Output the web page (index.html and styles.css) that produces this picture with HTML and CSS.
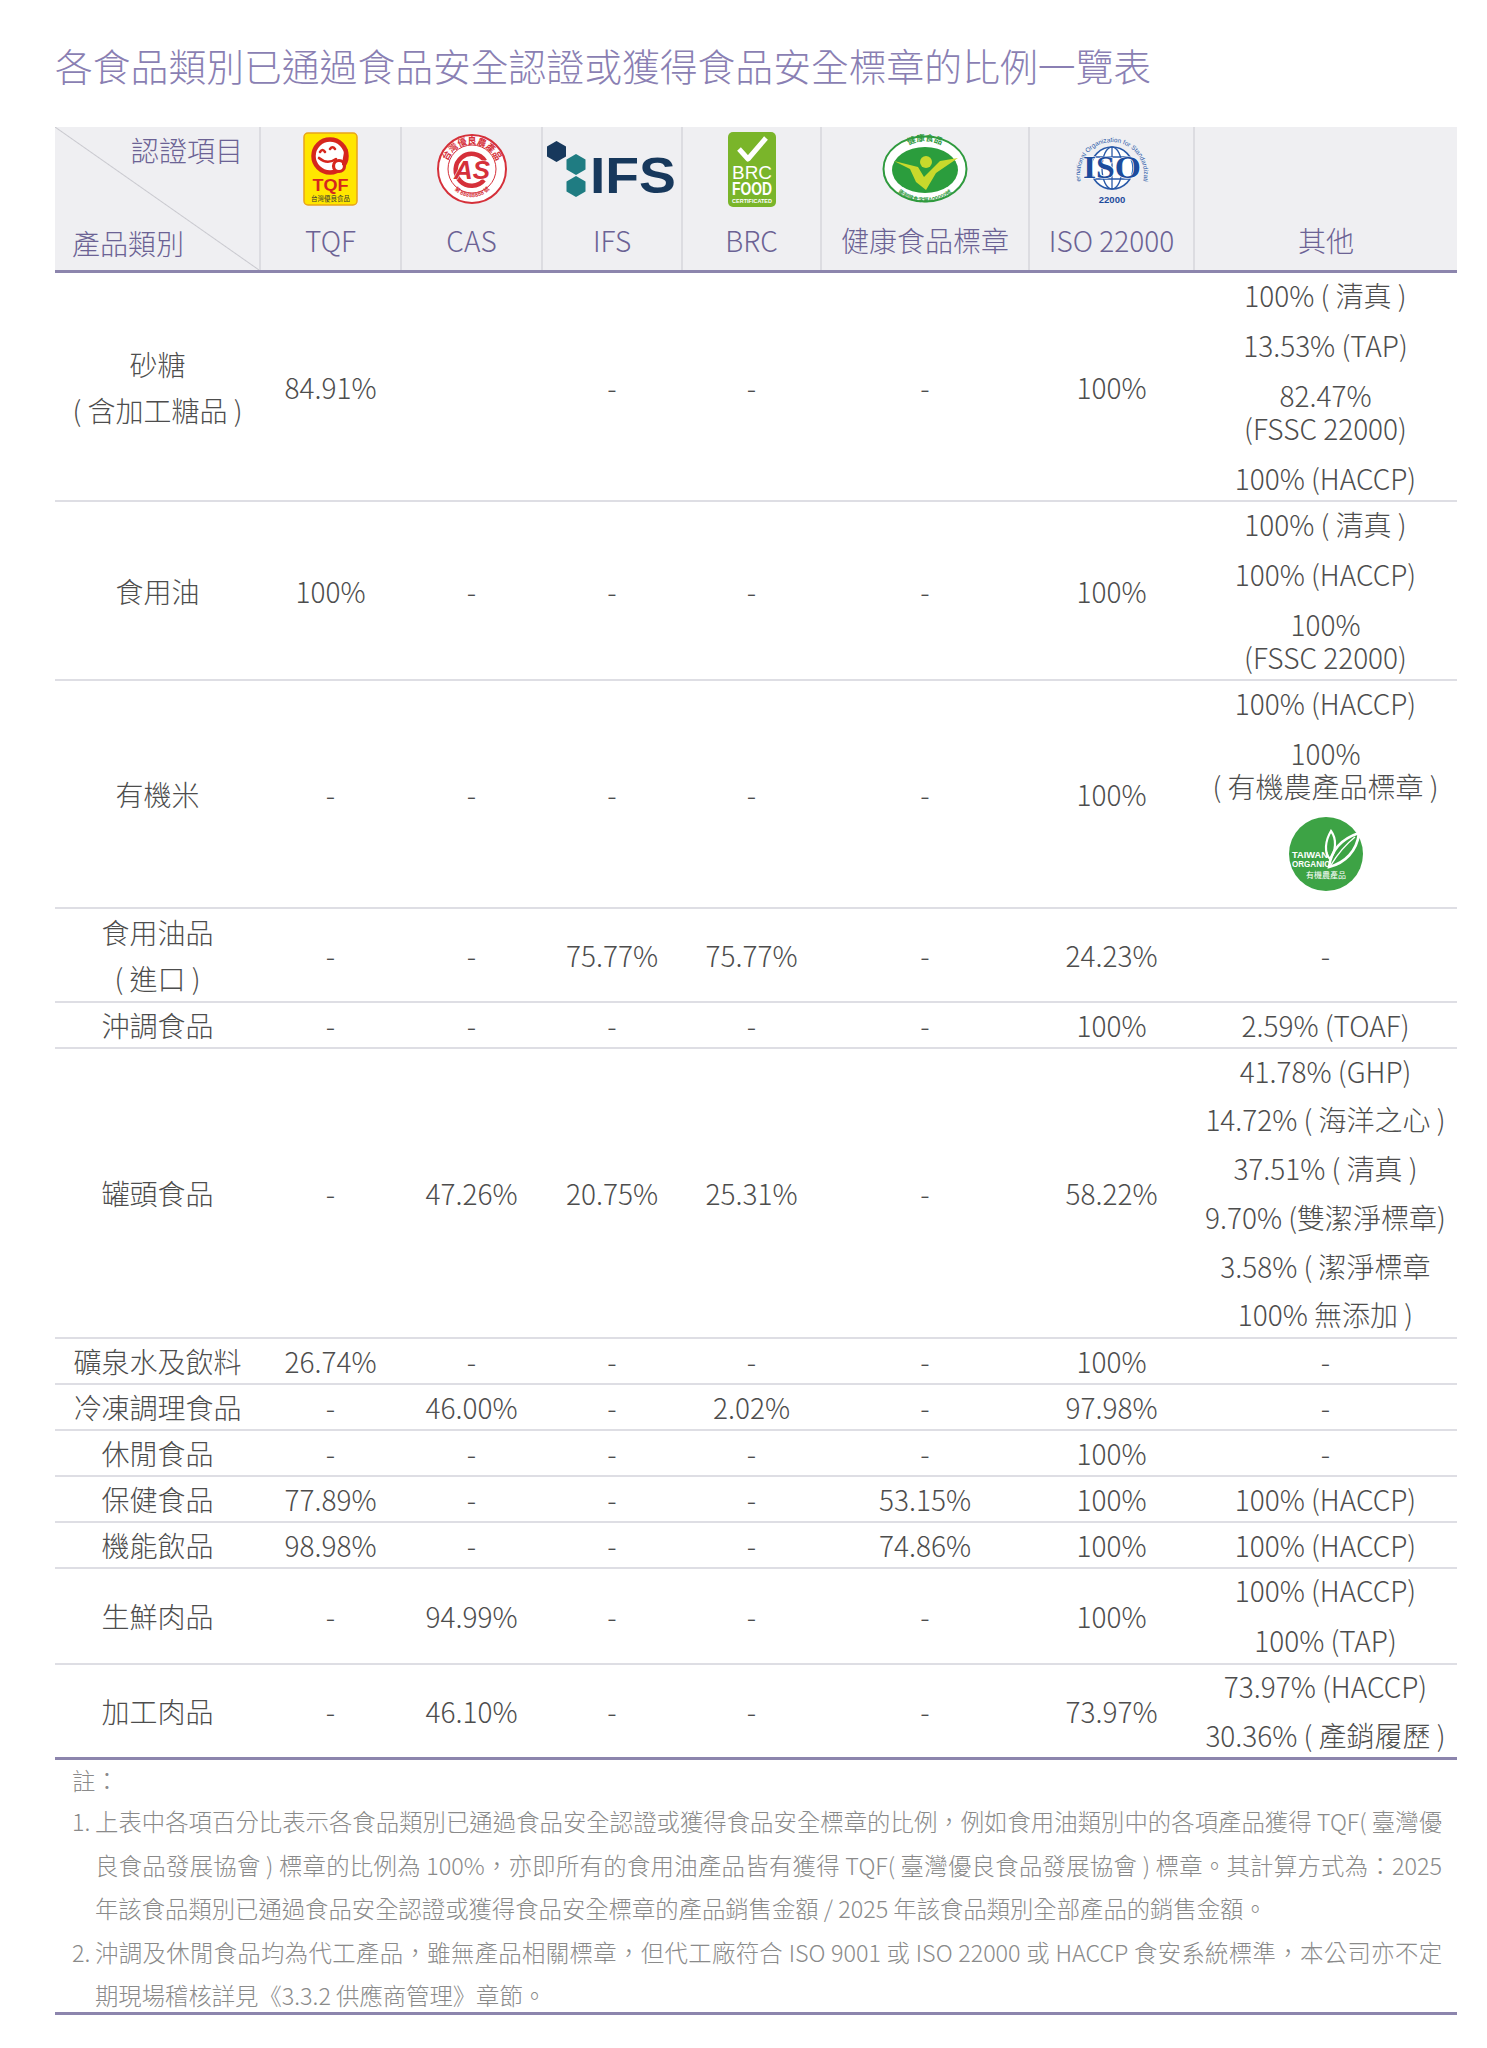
FILE: index.html
```html
<!DOCTYPE html>
<html lang="zh-Hant">
<head>
<meta charset="utf-8">
<title>各食品類別已通過食品安全認證或獲得食品安全標章的比例一覽表</title>
<link rel="stylesheet" href="styles.css">
</head>
<body>
<div class="page">
  <h1 class="title">各食品類別已通過食品安全認證或獲得食品安全標章的比例一覽表</h1>
  <table class="cert">
    <colgroup>
      <col class="c-name"><col class="c-tqf"><col class="c-cas"><col class="c-ifs"><col class="c-brc"><col class="c-hf"><col class="c-iso"><col class="c-oth">
    </colgroup>
    <thead>
      <tr>
        <th class="corner">
          <div class="corner-in">
            <span class="c-top">認證項目</span>
            <span class="c-bot">產品類別</span>
          </div>
        </th>
        <th>
          <div class="lg">
            <svg width="55" height="74" viewBox="0 0 55 74">
              <rect x="1" y="1" width="53" height="72" rx="4" fill="#ffe600" stroke="#e9a41a" stroke-width="1.5"/>
              <circle cx="27" cy="24" r="16.5" fill="#fff" stroke="#d6261d" stroke-width="4.5"/>
              <path d="M17 20 q2.5 -4 5 0" fill="none" stroke="#d6261d" stroke-width="2.6" stroke-linecap="round"/>
              <path d="M27 17 q2.5 -3.5 5 0" fill="none" stroke="#d6261d" stroke-width="2.6" stroke-linecap="round"/>
              <path d="M16 26 q8 7 17 1" fill="none" stroke="#d6261d" stroke-width="2.6" stroke-linecap="round"/>
              <circle cx="36" cy="34" r="5.5" fill="#fff" stroke="#d6261d" stroke-width="3.2"/>
              <path d="M40.5 32 L43 18" stroke="#d6261d" stroke-width="3.2" stroke-linecap="round"/>
              <text x="27.5" y="59" text-anchor="middle" class="svg-tqf" textLength="36" lengthAdjust="spacingAndGlyphs">TQF</text>
              <text x="27.5" y="69" text-anchor="middle" class="svg-tiny">台灣優良食品</text>
            </svg>
          </div>
          <div class="lbl">TQF</div>
        </th>
        <th>
          <div class="lg">
            <svg width="72" height="72" viewBox="0 0 72 72">
              <defs>
                <path id="casTop" d="M10 37 A26 26 0 0 1 62 37"/>
                <path id="casBot" d="M13 47 A24 24 0 0 0 59 47"/>
              </defs>
              <circle cx="36" cy="36" r="34" fill="#fff" stroke="#d5303a" stroke-width="2"/>
              <circle cx="36" cy="36" r="24" fill="#fff" stroke="#d5303a" stroke-width="1"/>
              <text class="svg-cas-arc"><textPath href="#casTop" startOffset="50%" text-anchor="middle">台灣優良農產品</textPath></text>
              <text class="svg-cas-bot"><textPath href="#casBot" startOffset="50%" text-anchor="middle">第 88888888 號</textPath></text>
              <path d="M49 28 A16 16 0 1 0 48 47" fill="none" stroke="#d5303a" stroke-width="4.5"/>
              <text x="36" y="46" text-anchor="middle" class="svg-as" textLength="36" lengthAdjust="spacingAndGlyphs">AS</text>
            </svg>
          </div>
          <div class="lbl">CAS</div>
        </th>
        <th>
          <div class="lg">
            <svg width="132" height="56" viewBox="0 0 132 56">
              <polygon points="10.5,0 20,5.5 20,15.5 10.5,21 1,15.5 1,5.5" fill="#17385c"/>
              <polygon points="30,13 39.5,18.5 39.5,28.5 30,34 20.5,28.5 20.5,18.5" fill="#1f7c82"/>
              <polygon points="30,35 39.5,40.5 39.5,50.5 30,56 20.5,50.5 20.5,40.5" fill="#1f7c82"/>
              <text x="44" y="52" class="svg-ifs" textLength="86" lengthAdjust="spacingAndGlyphs">IFS</text>
            </svg>
          </div>
          <div class="lbl">IFS</div>
        </th>
        <th>
          <div class="lg">
            <svg width="48" height="75" viewBox="0 0 48 75">
              <rect x="0" y="0" width="48" height="75" rx="5" fill="#7ab52a"/>
              <path d="M11 17 L20 27 L38 6" fill="none" stroke="#fff" stroke-width="5" stroke-linejoin="round"/>
              <text x="24" y="47" text-anchor="middle" class="svg-brc" textLength="40" lengthAdjust="spacingAndGlyphs">BRC</text>
              <text x="24" y="63" text-anchor="middle" class="svg-food" textLength="40" lengthAdjust="spacingAndGlyphs">FOOD</text>
              <text x="24" y="71" text-anchor="middle" class="svg-cert" textLength="40" lengthAdjust="spacingAndGlyphs">CERTIFICATED</text>
            </svg>
          </div>
          <div class="lbl">BRC</div>
        </th>
        <th>
          <div class="lg">
            <svg width="86" height="68" viewBox="0 0 86 68">
              <defs>
                <path id="hfTop" d="M14 30 A29 24 0 0 1 72 30"/>
                <path id="hfBot" d="M7 38 A36 29 0 0 0 79 38"/>
              </defs>
              <ellipse cx="43" cy="34" rx="41.5" ry="32.5" fill="#fff" stroke="#2f9a3e" stroke-width="2"/>
              <ellipse cx="43" cy="35" rx="33" ry="23" fill="#2b9d3d"/>
              <text class="svg-hf"><textPath href="#hfTop" startOffset="50%" text-anchor="middle">健康食品</textPath></text>
              <text class="svg-hf-bot"><textPath href="#hfBot" startOffset="50%" text-anchor="middle">衛部健食字第A00000號</textPath></text>
              <path d="M12 26 L36 32 L42 42 L58 26 L76 23 L54 38 L44 55 L34 47 L28 34 Z" fill="#c9d92c"/>
              <circle cx="44" cy="27" r="6" fill="#c9d92c"/>
            </svg>
          </div>
          <div class="lbl">健康食品標章</div>
        </th>
        <th>
          <div class="lg">
            <svg width="78" height="74" viewBox="0 0 78 74">
              <defs>
                <path id="isoArc" d="M8 50 A32 32 0 1 1 70 50"/>
              </defs>
              <text class="svg-iso-arc"><textPath href="#isoArc" startOffset="50%" text-anchor="middle">International Organization for Standardization</textPath></text>
              <circle cx="39" cy="36" r="21" fill="#fff" stroke="#2a5aa8" stroke-width="1.6"/>
              <ellipse cx="39" cy="36" rx="10" ry="21" fill="none" stroke="#2a5aa8" stroke-width="1.3"/>
              <line x1="39" y1="15" x2="39" y2="57" stroke="#2a5aa8" stroke-width="1.3"/>
              <line x1="21" y1="25" x2="57" y2="25" stroke="#2a5aa8" stroke-width="1.3"/>
              <line x1="21" y1="47" x2="57" y2="47" stroke="#2a5aa8" stroke-width="1.3"/>
              <text x="39" y="46" text-anchor="middle" class="svg-iso" textLength="58" lengthAdjust="spacingAndGlyphs">ISO</text>
              <text x="39" y="71" text-anchor="middle" class="svg-iso-n">22000</text>
            </svg>
          </div>
          <div class="lbl">ISO 22000</div>
        </th>
        <th>
          <div class="lg"></div>
          <div class="lbl">其他</div>
        </th>
      </tr>
    </thead>
    <tbody>
      <tr>
        <td class="name multi">砂糖<br>( 含加工糖品 )</td>
        <td>84.91%</td><td></td><td>-</td><td>-</td><td>-</td><td>100%</td>
        <td class="oth">
          <div class="e">100% ( 清真 )</div>
          <div class="e">13.53% (TAP)</div>
          <div class="e">82.47%<br>(FSSC 22000)</div>
          <div class="e">100% (HACCP)</div>
        </td>
      </tr>
      <tr>
        <td class="name">食用油</td>
        <td>100%</td><td>-</td><td>-</td><td>-</td><td>-</td><td>100%</td>
        <td class="oth">
          <div class="e">100% ( 清真 )</div>
          <div class="e">100% (HACCP)</div>
          <div class="e">100%<br>(FSSC 22000)</div>
        </td>
      </tr>
      <tr>
        <td class="name">有機米</td>
        <td>-</td><td>-</td><td>-</td><td>-</td><td>-</td><td>100%</td>
        <td class="oth">
          <div class="e">100% (HACCP)</div>
          <div class="e">100%<br>( 有機農產品標章 )</div>
          <div class="organic">
            <svg width="74" height="74" viewBox="0 0 74 74">
              <circle cx="37" cy="37" r="37" fill="#3da345"/>
              <path d="M40 50 C42 34 52 22 70 16 C68 34 56 46 40 50 Z" fill="none" stroke="#fff" stroke-width="2.6"/>
              <path d="M42 48 C48 38 56 28 66 20" fill="none" stroke="#fff" stroke-width="1.4"/>
              <path d="M41 42 C35 36 36 24 42 14 C48 22 47 34 41 42 Z" fill="none" stroke="#fff" stroke-width="2.2"/>
              <text x="3" y="41" class="svg-org" textLength="36" lengthAdjust="spacingAndGlyphs">TAIWAN</text>
              <text x="3" y="50" class="svg-org" textLength="38" lengthAdjust="spacingAndGlyphs">ORGANIC</text>
              <text x="37" y="61" text-anchor="middle" class="svg-org-zh">有機農產品</text>
            </svg>
          </div>
        </td>
      </tr>
      <tr>
        <td class="name multi">食用油品<br>( 進口 )</td>
        <td>-</td><td>-</td><td>75.77%</td><td>75.77%</td><td>-</td><td>24.23%</td>
        <td>-</td>
      </tr>
      <tr>
        <td class="name">沖調食品</td>
        <td>-</td><td>-</td><td>-</td><td>-</td><td>-</td><td>100%</td>
        <td class="oth"><div class="e">2.59% (TOAF)</div></td>
      </tr>
      <tr>
        <td class="name">罐頭食品</td>
        <td>-</td><td>47.26%</td><td>20.75%</td><td>25.31%</td><td>-</td><td>58.22%</td>
        <td class="oth tight">
          <div class="e">41.78% (GHP)</div>
          <div class="e">14.72% ( 海洋之心 )</div>
          <div class="e">37.51% ( 清真 )</div>
          <div class="e">9.70% (雙潔淨標章)</div>
          <div class="e">3.58% ( 潔淨標章</div>
          <div class="e">100% 無添加 )</div>
        </td>
      </tr>
      <tr>
        <td class="name">礦泉水及飲料</td>
        <td>26.74%</td><td>-</td><td>-</td><td>-</td><td>-</td><td>100%</td><td>-</td>
      </tr>
      <tr>
        <td class="name">冷凍調理食品</td>
        <td>-</td><td>46.00%</td><td>-</td><td>2.02%</td><td>-</td><td>97.98%</td><td>-</td>
      </tr>
      <tr>
        <td class="name">休閒食品</td>
        <td>-</td><td>-</td><td>-</td><td>-</td><td>-</td><td>100%</td><td>-</td>
      </tr>
      <tr>
        <td class="name">保健食品</td>
        <td>77.89%</td><td>-</td><td>-</td><td>-</td><td>53.15%</td><td>100%</td><td>100% (HACCP)</td>
      </tr>
      <tr>
        <td class="name">機能飲品</td>
        <td>98.98%</td><td>-</td><td>-</td><td>-</td><td>74.86%</td><td>100%</td><td>100% (HACCP)</td>
      </tr>
      <tr>
        <td class="name">生鮮肉品</td>
        <td>-</td><td>94.99%</td><td>-</td><td>-</td><td>-</td><td>100%</td>
        <td class="oth">
          <div class="e">100% (HACCP)</div>
          <div class="e">100% (TAP)</div>
        </td>
      </tr>
      <tr>
        <td class="name">加工肉品</td>
        <td>-</td><td>46.10%</td><td>-</td><td>-</td><td>-</td><td>73.97%</td>
        <td class="oth">
          <div class="e">73.97% (HACCP)</div>
          <div class="e">30.36% ( 產銷履歷 )</div>
        </td>
      </tr>
    </tbody>
  </table>
  <div class="notes">
    <div class="note-h">註：</div>
    <div class="note"><span class="num">1.</span><p>上表中各項百分比表示各食品類別已通過食品安全認證或獲得食品安全標章的比例，例如食用油類別中的各項產品獲得 TQF( 臺灣優良食品發展協會 ) 標章的比例為 100%，亦即所有的食用油產品皆有獲得 TQF( 臺灣優良食品發展協會 ) 標章。其計算方式為：2025 年該食品類別已通過食品安全認證或獲得食品安全標章的產品銷售金額 / 2025 年該食品類別全部產品的銷售金額。</p></div>
    <div class="note"><span class="num">2.</span><p>沖調及休閒食品均為代工產品，雖無產品相關標章，但代工廠符合 ISO 9001 或 ISO 22000 或 HACCP 食安系統標準，本公司亦不定期現場稽核詳見《3.3.2 供應商管理》章節。</p></div>
  </div>
</div>
</body>
</html>
```

FILE: styles.css
```css
* { box-sizing: border-box; }
html, body { margin: 0; padding: 0; background: #fff; }
body {
  font-family: "Noto Sans CJK TC", "Noto Sans", sans-serif;
  font-weight: 300;
  color: #4d4d4d;
}
.page {
  width: 1487px;
  padding: 40px 30px 0 55px;
}
.title {
  margin: 0 0 38px;
  font-size: 37.8px;
  line-height: 49px;
  font-weight: 300;
  color: #8a7fb3;
  letter-spacing: 0;
}
.cert {
  width: 1402px;
  table-layout: fixed;
  border-collapse: collapse;
}
.c-name { width: 205px; }
.c-tqf { width: 141px; }
.c-cas { width: 141px; }
.c-ifs { width: 140px; }
.c-brc { width: 139px; }
.c-hf { width: 208px; }
.c-iso { width: 165px; }
.c-oth { width: 263px; }

.cert th {
  background: #efeff2;
  padding: 2px 0 8px;
  height: 143px;
  border-left: 2px solid #dcdce1;
  border-bottom: 3px solid #8c85ad;
  vertical-align: top;
  font-weight: 300;
}
.cert th:first-child { border-left: none; }
.lg {
  height: 80px;
  display: flex;
  align-items: center;
  justify-content: center;
}
.lg svg { display: block; overflow: visible; }
.lbl {
  margin-top: 9px;
  font-size: 28px;
  line-height: 44px;
  color: #6b6294;
  white-space: nowrap;
}
.cert th.corner {
  padding: 0;
  background-color: #efeff2;
  background-image: linear-gradient(to top right, rgba(0,0,0,0) calc(50% - 1px), #c9c9cf 50%, rgba(0,0,0,0) calc(50% + 1px));
}
.corner-in {
  height: 141px;
  display: flex;
  flex-direction: column;
  justify-content: space-between;
  padding: 3px 16px 5px 17px;
  font-size: 28px;
  line-height: 40px;
  color: #6b6294;
}
.c-top { align-self: flex-end; }
.c-bot { align-self: flex-start; }

.cert td {
  font-size: 28px;
  line-height: 44px;
  text-align: center;
  vertical-align: middle;
  padding: 0 2px;
  border-bottom: 2px solid #dedee4;
  color: #4d4d4d;
  white-space: nowrap;
}
.cert tbody tr:last-child td { border-bottom: 3px solid #8c85ad; line-height: 43px; }
.cert td.multi { line-height: 46px; }
.oth .e {
  line-height: 33px;
  padding: 5.5px 0;
}
.oth .e + .e { margin-top: 6px; }
.oth.tight .e + .e { margin-top: 4.8px; }
.cert tbody tr:last-child .oth .e + .e { margin-top: 4.5px; }
.organic {
  display: flex;
  justify-content: center;
  padding: 9px 0 16px;
}
.organic svg { display: block; }

.notes {
  padding: 0 15px 0 17px;
  border-bottom: 3px solid #8c85ad;
  font-size: 23.35px;
  line-height: 43.5px;
  color: #8a8a8a;
}
.note-h { line-height: 40px; }
.note { display: flex; }
.note:last-child { margin-bottom: -6px; }
.num { flex: 0 0 23px; }
.note p {
  margin: 0;
  flex: 1;
  text-align: justify;
}

/* svg text */
.svg-tqf { font-family: "Liberation Sans", sans-serif; font-weight: 700; font-size: 16px; fill: #d6261d; }
.svg-tiny { font-family: "Noto Sans CJK TC", sans-serif; font-weight: 400; font-size: 6.5px; fill: #333; }
.svg-cas-arc { font-family: "Noto Sans CJK TC", sans-serif; font-weight: 700; font-size: 9px; fill: #d5303a; }
.svg-cas-bot { font-family: "Noto Sans CJK TC", sans-serif; font-weight: 700; font-size: 5.5px; fill: #d5303a; }
.svg-as { font-family: "Liberation Sans", sans-serif; font-weight: 700; font-style: italic; font-size: 26px; fill: #d5303a; stroke: #fff; stroke-width: 1; paint-order: stroke; }
.svg-ifs { font-family: "Liberation Sans", sans-serif; font-weight: 700; font-size: 50px; fill: #17385c; }
.svg-brc { font-family: "Liberation Sans Narrow", "Liberation Sans", sans-serif; font-weight: 400; font-size: 18px; fill: #fff; }
.svg-food { font-family: "Liberation Sans Narrow", "Liberation Sans", sans-serif; font-weight: 700; font-size: 18px; fill: #fff; }
.svg-cert { font-family: "Liberation Sans", sans-serif; font-weight: 700; font-size: 5px; fill: #fff; }
.svg-hf { font-family: "Noto Sans CJK TC", sans-serif; font-weight: 700; font-size: 8.5px; fill: #2f9a3e; }
.svg-hf-bot { font-family: "Noto Sans CJK TC", sans-serif; font-weight: 700; font-size: 5.5px; fill: #2f9a3e; }
.svg-iso-arc { font-family: "Liberation Sans", sans-serif; font-size: 6.4px; fill: #2a5aa8; }
.svg-iso { font-family: "Liberation Serif", serif; font-weight: 700; font-size: 32px; fill: #1d4c9c; stroke: #fff; stroke-width: 1.2; paint-order: stroke; }
.svg-iso-n { font-family: "Liberation Sans", sans-serif; font-weight: 700; font-size: 9.5px; fill: #1d4c9c; }
.svg-org { font-family: "Liberation Sans", sans-serif; font-weight: 700; font-size: 9px; fill: #fff; }
.svg-org-zh { font-family: "Noto Sans CJK TC", sans-serif; font-weight: 400; font-size: 8px; fill: #fff; }
```
